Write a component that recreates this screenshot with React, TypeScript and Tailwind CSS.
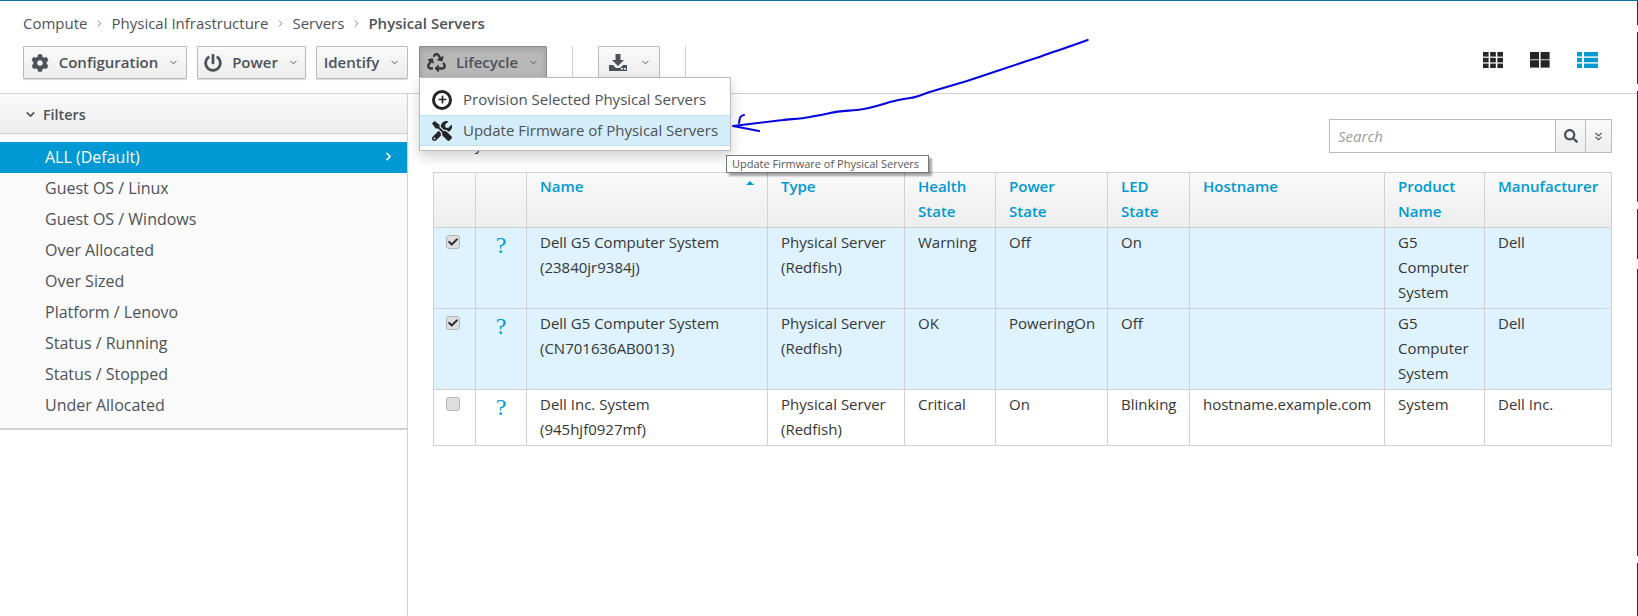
import React from 'react';
import { FaCog, FaRecycle, FaTools, FaSearch, FaCheck, FaPlus, FaPowerOff } from 'react-icons/fa';
import { FiChevronDown, FiChevronRight, FiChevronsDown } from 'react-icons/fi';

const filters = [
  'Guest OS / Linux',
  'Guest OS / Windows',
  'Over Allocated',
  'Over Sized',
  'Platform / Lenovo',
  'Status / Running',
  'Status / Stopped',
  'Under Allocated',
];

const rows = [
  { checked: true, name: ['Dell G5 Computer System', '(23840jr9384j)'], health: 'Warning', power: 'Off', led: 'On', host: '', product: 'G5 Computer System', maker: 'Dell' },
  { checked: true, name: ['Dell G5 Computer System', '(CN701636AB0013)'], health: 'OK', power: 'PoweringOn', led: 'Off', host: '', product: 'G5 Computer System', maker: 'Dell' },
  { checked: false, name: ['Dell Inc. System', '(945hjf0927mf)'], health: 'Critical', power: 'On', led: 'Blinking', host: 'hostname.example.com', product: 'System', maker: 'Dell Inc.' },
];

const headers = [
  { label: 'Name', w: 'w-[241px]' },
  { label: 'Type', w: 'w-[137px]' },
  { label: 'Health State', w: 'w-[91px]' },
  { label: 'Power', label2: 'State', w: 'w-[112px]' },
  { label: 'LED State', w: 'w-[82px]' },
  { label: 'Hostname', w: 'w-[195px]' },
  { label: 'Product Name', w: 'w-[100px]' },
  { label: 'Manufacturer', w: 'w-[127px]' },
];

const ToolButton: React.FC<{ label?: string; icon?: React.ReactNode; active?: boolean; className: string }> = ({ label, icon, active, className }) => (
  <button
    className={`flex h-[33px] items-center justify-center gap-[10px] rounded-[1px] border text-[15px] font-semibold text-[#4d5258] ${className} ${
      active
        ? 'border-[#8a8a8a] bg-[#b8b8b8] shadow-[inset_0_2px_6px_rgba(0,0,0,0.15)]'
        : 'border-[#bbbbbb] bg-gradient-to-b from-[#fafafa] to-[#ededed] shadow-[0_1px_1px_rgba(0,0,0,0.15)]'
    }`}
  >
    {icon}
    {label && <span>{label}</span>}
    <FiChevronDown className="h-[11px] w-[11px] text-[#4d5258]" />
  </button>
);

const DownloadIcon = () => (
  <svg viewBox="0 0 20 20" className="h-[20px] w-[20px] text-[#4d5258]" fill="currentColor">
    <path d="M7.5 1h5v6h3.5L10 13 4 7h3.5z" />
    <path d="M1 12h4l3 3h4l3-3h4v6H1z" />
    <rect x="13" y="15" width="2" height="1.6" fill="#f5f5f5" />
    <rect x="16" y="15" width="2" height="1.6" fill="#f5f5f5" />
  </svg>
);

const GridIcon: React.FC<{ n: number }> = ({ n }) => {
  const cell = n === 3 ? 5.6 : 9;
  const step = n === 3 ? 7.2 : 10.6;
  const items = [];
  for (let r = 0; r < (n === 3 ? 3 : 2); r++) {
    for (let c = 0; c < n; c++) {
      items.push(<rect key={`${r}-${c}`} x={c * step} y={r * (n === 3 ? 5.8 : 8.2)} width={cell} height={n === 3 ? 4.6 : 7.4} />);
    }
  }
  return (
    <svg viewBox="0 0 20 16" className="h-[16px] w-[20px] text-[#252525]" fill="currentColor">
      {items}
    </svg>
  );
};

const ListIcon = () => (
  <svg viewBox="0 0 21 16" className="h-[16px] w-[21px] text-[#0099d3]" fill="currentColor">
    <rect x="0" y="0" width="5" height="4.4" />
    <rect x="7" y="0" width="14" height="4.4" />
    <rect x="0" y="5.8" width="5" height="4.4" />
    <rect x="7" y="5.8" width="14" height="4.4" />
    <rect x="0" y="11.6" width="5" height="4.4" />
    <rect x="7" y="11.6" width="14" height="4.4" />
  </svg>
);

const Checkbox: React.FC<{ checked: boolean }> = ({ checked }) => (
  <span className="flex h-[14px] w-[14px] items-center justify-center rounded-[3px] border border-[#b5b5b5] bg-[#dedede]">
    {checked && <FaCheck className="h-[10px] w-[10px] text-[#2b2b2b]" />}
  </span>
);

const Crumb: React.FC<{ label: string }> = ({ label }) => (
  <>
    <span>{label}</span>
    <FiChevronRight className="h-[11px] w-[11px] text-[#72767b]" />
  </>
);

export default function App() {
  return (
    <div className="relative flex h-[616px] w-[1638px] flex-col overflow-hidden border-t border-t-[#0b6fa6] bg-white font-['Open_Sans',sans-serif] text-[15px] text-[#363636]">
      {/* top bar */}
      <div className="h-[93px] shrink-0 border-b border-[#d1d1d1] pl-[23px] pr-[40px]">
        <div className="flex h-[45px] items-center gap-[6.5px] pb-[1px] text-[#4d5258]">
          <Crumb label="Compute" />
          <Crumb label="Physical Infrastructure" />
          <Crumb label="Servers" />
          <span className="font-semibold">Physical Servers</span>
        </div>
        <div className="flex items-start">
          <ToolButton className="w-[164px]" label="Configuration" icon={<FaCog className="h-[18px] w-[18px]" />} />
          <ToolButton className="ml-[10px] w-[109px]" label="Power" icon={<FaPowerOff className="h-[18px] w-[18px]" />} />
          <ToolButton className="ml-[10px] w-[92px]" label="Identify" />
          <div className="relative ml-[11px]">
            <ToolButton active className="w-[128px]" label="Lifecycle" icon={<FaRecycle className="h-[19px] w-[19px] text-[#363636]" />} />
            <div className="absolute left-0 top-[31px] z-20 h-[74px] w-[312px] border border-[#bbbbbb] bg-white pt-[6px] shadow-[0_6px_12px_rgba(0,0,0,0.18)]">
              <div className="flex h-[31px] items-center text-[#4d5258]">
                <span className="ml-[12px] flex h-[20px] w-[20px] items-center justify-center rounded-full border-[3px] border-[#252525]">
                  <FaPlus className="h-[9px] w-[9px] text-[#252525]" />
                </span>
                <span className="ml-[11px]">Provision Selected Physical Servers</span>
              </div>
              <div className="flex h-[31px] items-center border-y border-[#bee1f4] bg-[#d4edfa] text-[#4d5258]">
                <FaTools className="ml-[12px] h-[20px] w-[20px] text-[#252525]" />
                <span className="ml-[11px]">Update Firmware of Physical Servers</span>
              </div>
            </div>
          </div>
          <div className="ml-[25px] h-[33px] w-px bg-[#d1d1d1]" />
          <ToolButton className="ml-[25px] w-[62px] !gap-[12px]" icon={<DownloadIcon />} />
          <div className="ml-[25px] h-[33px] w-px bg-[#d1d1d1]" />
          <div className="ml-auto flex items-center gap-[27px] pt-[6px]">
            <GridIcon n={3} />
            <GridIcon n={2} />
            <ListIcon />
          </div>
        </div>
      </div>

      <div className="flex min-h-0 flex-1">
        {/* filters sidebar */}
        <aside className="w-[408px] shrink-0 border-r border-[#d1d1d1]">
          <div className="flex h-[40px] items-center gap-[6px] border-b border-[#d1d1d1] bg-gradient-to-b from-[#fafafa] to-[#ededed] pl-[24px] pt-[2px] text-[14.3px] font-semibold text-[#4d5258]">
            <FiChevronDown className="h-[13px] w-[13px] stroke-[3]" />
            Filters
          </div>
          <div className="h-[296px] border-b-2 border-[#d1d1d1] bg-[#fafafa] pt-[8px] text-[16px]">
            <div className="flex h-[31px] items-center justify-between bg-[#0099d3] pb-[2px] pl-[45px] pr-[12px] text-white">
              ALL (Default)
              <FiChevronRight className="h-[13px] w-[13px] stroke-[3]" />
            </div>
            {filters.map((f) => (
              <div key={f} className="flex h-[31px] items-center pb-[2px] pl-[45px] text-[#4d5258]">
                {f}
              </div>
            ))}
          </div>
        </aside>

        {/* main content */}
        <main className="min-w-0 flex-1 pl-[25px] pr-[26px]">
          <div className="flex h-[78px] items-start justify-between pt-[25px]">
            <span className="mt-[15px] leading-[20px]">Sort by</span>
            <div className="flex h-[34px] w-[283px] border border-[#bbbbbb]">
              <div className="flex-1 pl-[8px] italic leading-[32px] text-[#9c9c9c]">Search</div>
              <div className="flex w-[30px] items-center justify-center border-l border-[#bbbbbb] bg-gradient-to-b from-[#fafafa] to-[#ededed]">
                <FaSearch className="h-[14px] w-[14px] text-[#4d5258]" />
              </div>
              <div className="flex w-[26px] items-center justify-center border-l border-[#bbbbbb] bg-gradient-to-b from-[#fafafa] to-[#ededed]">
                <FiChevronsDown className="h-[13px] w-[13px] text-[#4d5258]" />
              </div>
            </div>
          </div>
          <table className="w-[1179px] table-fixed border-collapse border border-[#d1d1d1] leading-[25px]">
            <thead>
              <tr className="h-[55px] bg-gradient-to-b from-[#fafafa] to-[#ededed]">
                <th className="w-[42px] border border-[#d1d1d1]" />
                <th className="w-[51px] border border-[#d1d1d1]" />
                {headers.map((h, i) => (
                  <th key={h.label} className={`${h.w} relative border border-[#d1d1d1] pl-[13px] pr-[4px] pt-[1px] text-left align-top font-semibold text-[#0099d3]`}>
                    {h.label}
                    {h.label2 && (
                      <>
                        <br />
                        {h.label2}
                      </>
                    )}
                    {i === 0 && <span className="absolute right-[13px] top-[8px] h-0 w-0 border-x-[4px] border-b-[4px] border-x-transparent border-b-[#0099d3]" />}
                  </th>
                ))}
              </tr>
            </thead>
            <tbody>
              {rows.map((r) => (
                <tr key={r.name[1]} className={r.checked ? 'h-[81px] bg-[#def3ff]' : 'h-[56px] bg-white'}>
                  <td className="border border-[#d1d1d1] pl-[12px] pt-[7px] align-top">
                    <Checkbox checked={r.checked} />
                  </td>
                  <td className="border border-[#d1d1d1] pt-[5px] text-center align-top font-['Liberation_Serif',serif] text-[24px] leading-[24px] text-[#0099d3]">?</td>
                  <td className="border border-[#d1d1d1] pl-[13px] pt-[2px] align-top">
                    {r.name[0]}
                    <br />
                    {r.name[1]}
                  </td>
                  <td className="border border-[#d1d1d1] pl-[13px] pt-[2px] align-top">Physical Server (Redfish)</td>
                  <td className="border border-[#d1d1d1] pl-[13px] pt-[2px] align-top">{r.health}</td>
                  <td className="border border-[#d1d1d1] pl-[13px] pt-[2px] align-top">{r.power}</td>
                  <td className="border border-[#d1d1d1] pl-[13px] pt-[2px] align-top">{r.led}</td>
                  <td className="border border-[#d1d1d1] pl-[13px] pt-[2px] align-top">{r.host}</td>
                  <td className="border border-[#d1d1d1] pl-[13px] pr-[8px] pt-[2px] align-top">{r.product}</td>
                  <td className="border border-[#d1d1d1] pl-[13px] pt-[2px] align-top">{r.maker}</td>
                </tr>
              ))}
            </tbody>
          </table>
        </main>
      </div>

      {/* browser tooltip */}
      <div className="absolute left-[726px] top-[154px] z-30 flex h-[18px] w-[203px] items-center whitespace-nowrap border border-[#767676] bg-white pl-[5px] text-[11px] text-[#575757] shadow-[3px_3px_2px_rgba(0,0,0,0.35)]">
        Update Firmware of Physical Servers
      </div>

      {/* hand drawn arrow on the screenshot */}
      <svg className="absolute left-0 top-[-1px] z-40 h-[616px] w-[1638px]" viewBox="0 0 1638 616" fill="none" stroke="#0505e0" strokeWidth="2.1" strokeLinecap="round" strokeLinejoin="round">
        <path d="M1087.7 40 C1075 45 1064 48 1053 52 C1045 55 1040 57 1033 59 L1000 70 L967 81 L933 91 C925 93 918 97 910 98 C902 99 897 100 890 102 C880 105 868 109 857 110 C845 111 838 111 830 113 C822 115 815 116 810 117 C800 119 790 119 783 120 L733 126 L759 131" />
        <path d="M739 123 C740 119 739 116 744 115" />
        {/* window edge that got caught in the screenshot */}
        <path stroke="#5c1058" strokeWidth="1" strokeLinecap="butt" d="M1637.5 0V25M1637.5 32V84M1637.5 91V202M1637.5 209V259M1637.5 269V556M1637.5 563V616" />
      </svg>
    </div>
  );
}
